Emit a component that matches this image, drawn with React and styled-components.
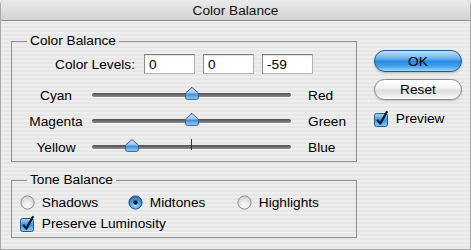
import React from "react";
import styled, { createGlobalStyle } from "styled-components";

const GlobalStyle = createGlobalStyle`
  html, body {
    margin: 0;
    padding: 0;
    background: #ececec;
  }
  * {
    box-sizing: border-box;
  }
`;

const FONT = `"Liberation Sans", Arial, sans-serif`;

const sliders = [
  { left: "Cyan", right: "Red", value: 0 },
  { left: "Magenta", right: "Green", value: 0 },
  { left: "Yellow", right: "Blue", value: -59 },
];

const levels = ["0", "0", "-59"];

function App() {
  return (
    <>
      <GlobalStyle />
      <Window>
        <TitleBar>Color Balance</TitleBar>
        <Body>
          <LeftColumn>
            <Group $pb={1}>
              <Legend>Color Balance</Legend>
              <LevelsRow>
                <LevelsLabel>Color Levels:</LevelsLabel>
                {levels.map((v, i) => (
                  <LevelInput key={i} readOnly value={v} />
                ))}
              </LevelsRow>
              {sliders.map(s => (
                <SliderRow key={s.left}>
                  <SliderLabel>{s.left}</SliderLabel>
                  <TrackArea>
                    <Track />
                    <Tick />
                    <ThumbWrap style={{ left: `${99.5 + s.value * 1.01 - 7}px` }}>
                      <Thumb />
                    </ThumbWrap>
                  </TrackArea>
                  <SliderEnd>{s.right}</SliderEnd>
                </SliderRow>
              ))}
            </Group>

            <Group $pb={5} $mt={10}>
              <Legend>Tone Balance</Legend>
              <RadioRow>
                <Option><Radio /> Shadows</Option>
                <Option><Radio checked /> Midtones</Option>
                <Option><Radio /> Highlights</Option>
              </RadioRow>
              <CheckRow>
                <Option><CheckBox /> Preserve Luminosity</Option>
              </CheckRow>
            </Group>
          </LeftColumn>

          <RightColumn>
            <OkButton>OK</OkButton>
            <ResetButton>Reset</ResetButton>
            <PreviewRow>
              <CheckBox /> Preview
            </PreviewRow>
          </RightColumn>
        </Body>
      </Window>
    </>
  );
}

function Thumb() {
  return (
    <svg width="14" height="13" viewBox="0 0 14 13">
      <defs>
        <linearGradient id="thumbFill" x1="0" y1="0" x2="0" y2="1">
          <stop offset="0" stopColor="#e2ecf8" />
          <stop offset="0.45" stopColor="#9fc0e8" />
          <stop offset="0.55" stopColor="#3d8ce0" />
          <stop offset="1" stopColor="#9ad0f6" />
        </linearGradient>
      </defs>
      <path
        d="M7 0.6 L13.4 6 V10.5 Q13.4 12.4 11.5 12.4 H2.5 Q0.6 12.4 0.6 10.5 V6 Z"
        fill="url(#thumbFill)"
        stroke="#3e5f8c"
        strokeWidth="1"
      />
    </svg>
  );
}

function Radio({ checked }) {
  return (
    <svg width="15" height="15" viewBox="0 0 15 15">
      <defs>
        <radialGradient id="radioOff" cx="0.5" cy="0.7" r="0.6">
          <stop offset="0" stopColor="#ffffff" />
          <stop offset="1" stopColor="#d4d4d4" />
        </radialGradient>
        <radialGradient id="radioOn" cx="0.5" cy="0.7" r="0.6">
          <stop offset="0" stopColor="#b6e2fb" />
          <stop offset="0.6" stopColor="#4a9fe6" />
          <stop offset="1" stopColor="#2c6fb8" />
        </radialGradient>
      </defs>
      <circle
        cx="7.5"
        cy="7.5"
        r="6.6"
        fill={checked ? "url(#radioOn)" : "url(#radioOff)"}
        stroke={checked ? "#2d557f" : "#8e8e8e"}
        strokeWidth="1"
      />
      {checked && <circle cx="7.5" cy="7.5" r="2.3" fill="#0d1a2a" />}
    </svg>
  );
}

function CheckBox() {
  return (
    <svg width="15" height="17" viewBox="0 0 15 17">
      <defs>
        <linearGradient id="checkFill" x1="0" y1="0" x2="0" y2="1">
          <stop offset="0" stopColor="#a9d3f5" />
          <stop offset="0.5" stopColor="#3f93e0" />
          <stop offset="1" stopColor="#8dcbf6" />
        </linearGradient>
      </defs>
      <rect x="0.5" y="3.5" width="13" height="13" rx="2" fill="url(#checkFill)" stroke="#2c5a88" />
      <path d="M3.2 9.6 L6.3 13.6 L13.2 1.2" fill="none" stroke="#0c1a33" strokeWidth="2.3" strokeLinejoin="round" />
    </svg>
  );
}

export default App;

const Window = styled.div`
  width: 471px;
  height: 250px;
  display: flex;
  flex-direction: column;
  background: repeating-linear-gradient(to bottom, #eeeeee 0px, #eeeeee 2px, #e6e6e6 2px, #e6e6e6 4px);
  border: 1px solid #a8a8a8;
  border-top: none;
  border-radius: 5px 5px 0 0;
  overflow: hidden;
  font-family: ${FONT};
  font-size: 13.7px;
  color: #000;
`;

const TitleBar = styled.div`
  height: 21px;
  flex: none;
  display: flex;
  align-items: center;
  justify-content: center;
  background: linear-gradient(to bottom, #ececec, #d2d2d2);
  border-bottom: 1px solid #8c8c8c;
  font-size: 13.7px;
  color: #111;
`;

const Body = styled.div`
  display: flex;
  padding: 12px 0 0 10px;
`;

const LeftColumn = styled.div`
  width: 346px;
  display: flex;
  flex-direction: column;
`;

const Group = styled.fieldset`
  margin: ${p => p.$mt || 0}px 0 0 0;
  padding: 5px 0 ${p => p.$pb}px 8px;
  border: 1px solid #8e8e8e;
  min-width: 0;
`;

const Legend = styled.legend`
  margin-left: 7px;
  padding: 0 3px;
  height: 16px;
  line-height: 16px;
`;

const LevelsRow = styled.div`
  display: flex;
  align-items: center;
  height: 20px;
  margin-bottom: 8px;
`;

const LevelsLabel = styled.div`
  width: 115px;
  text-align: right;
  margin-right: 9px;
`;

const LevelInput = styled.input`
  width: 51px;
  height: 20px;
  margin: 0 8px 0 0;
  padding: 0 4px;
  border: 1px solid #b4b4b4;
  border-top-color: #7e7e7e;
  border-left-color: #8e8e8e;
  background: #fff;
  box-shadow: inset 0 1px 1px rgba(0, 0, 0, 0.12);
  font-family: ${FONT};
  font-size: 13.7px;
  color: #000;
  outline: none;
`;

const SliderRow = styled.div`
  display: grid;
  grid-template-columns: 72px 199px auto;
  align-items: center;
  height: 26px;
`;

const SliderLabel = styled.div`
  text-align: center;
`;

const SliderEnd = styled.div`
  padding-left: 17px;
`;

const TrackArea = styled.div`
  position: relative;
  height: 26px;
  display: flex;
  align-items: center;
`;

const Track = styled.div`
  width: 100%;
  height: 4px;
  border-radius: 2px;
  background: linear-gradient(to bottom, #4e4e4e, #8e8e8e);
  box-shadow: 0 1px 0 rgba(255, 255, 255, 0.8);
`;

const Tick = styled.div`
  position: absolute;
  left: 99px;
  top: 5px;
  width: 1px;
  height: 11px;
  background: #333;
`;

const ThumbWrap = styled.div`
  position: absolute;
  top: 5px;
  width: 14px;
  height: 13px;
  line-height: 0;
`;

const RadioRow = styled.div`
  display: grid;
  grid-template-columns: 108px 109px auto;
  align-items: center;
  height: 18px;
  margin-bottom: 3px;
`;

const CheckRow = styled.div`
  display: flex;
  align-items: center;
  height: 18px;
`;

const Option = styled.div`
  display: flex;
  align-items: center;
  gap: 3px;
  white-space: pre;
  svg {
    flex: none;
  }
`;

const RightColumn = styled.div`
  width: 88px;
  margin-left: 17px;
  padding-top: 17px;
  display: flex;
  flex-direction: column;
`;

const PillButton = styled.div`
  width: 88px;
  display: flex;
  align-items: center;
  justify-content: center;
  border-radius: 11px;
  font-size: 13.7px;
  color: #000;
`;

const OkButton = styled(PillButton)`
  height: 22px;
  border: 1px solid #25598f;
  background: linear-gradient(
    to bottom,
    #bfe0fa 0%,
    #6db6f0 35%,
    #2a8ae0 52%,
    #3fa0ea 75%,
    #9ad8fb 100%
  );
  box-shadow: 0 1px 2px rgba(0, 0, 0, 0.25);
`;

const ResetButton = styled(PillButton)`
  height: 21px;
  margin-top: 7px;
  border: 1px solid #8a8a8a;
  background: linear-gradient(
    to bottom,
    #ffffff 0%,
    #f4f4f4 40%,
    #dedede 55%,
    #ececec 80%,
    #ffffff 100%
  );
  box-shadow: 0 1px 2px rgba(0, 0, 0, 0.2);
`;

const PreviewRow = styled.div`
  margin-top: 10px;
  display: flex;
  align-items: center;
  gap: 3px;
  white-space: pre;
`;
